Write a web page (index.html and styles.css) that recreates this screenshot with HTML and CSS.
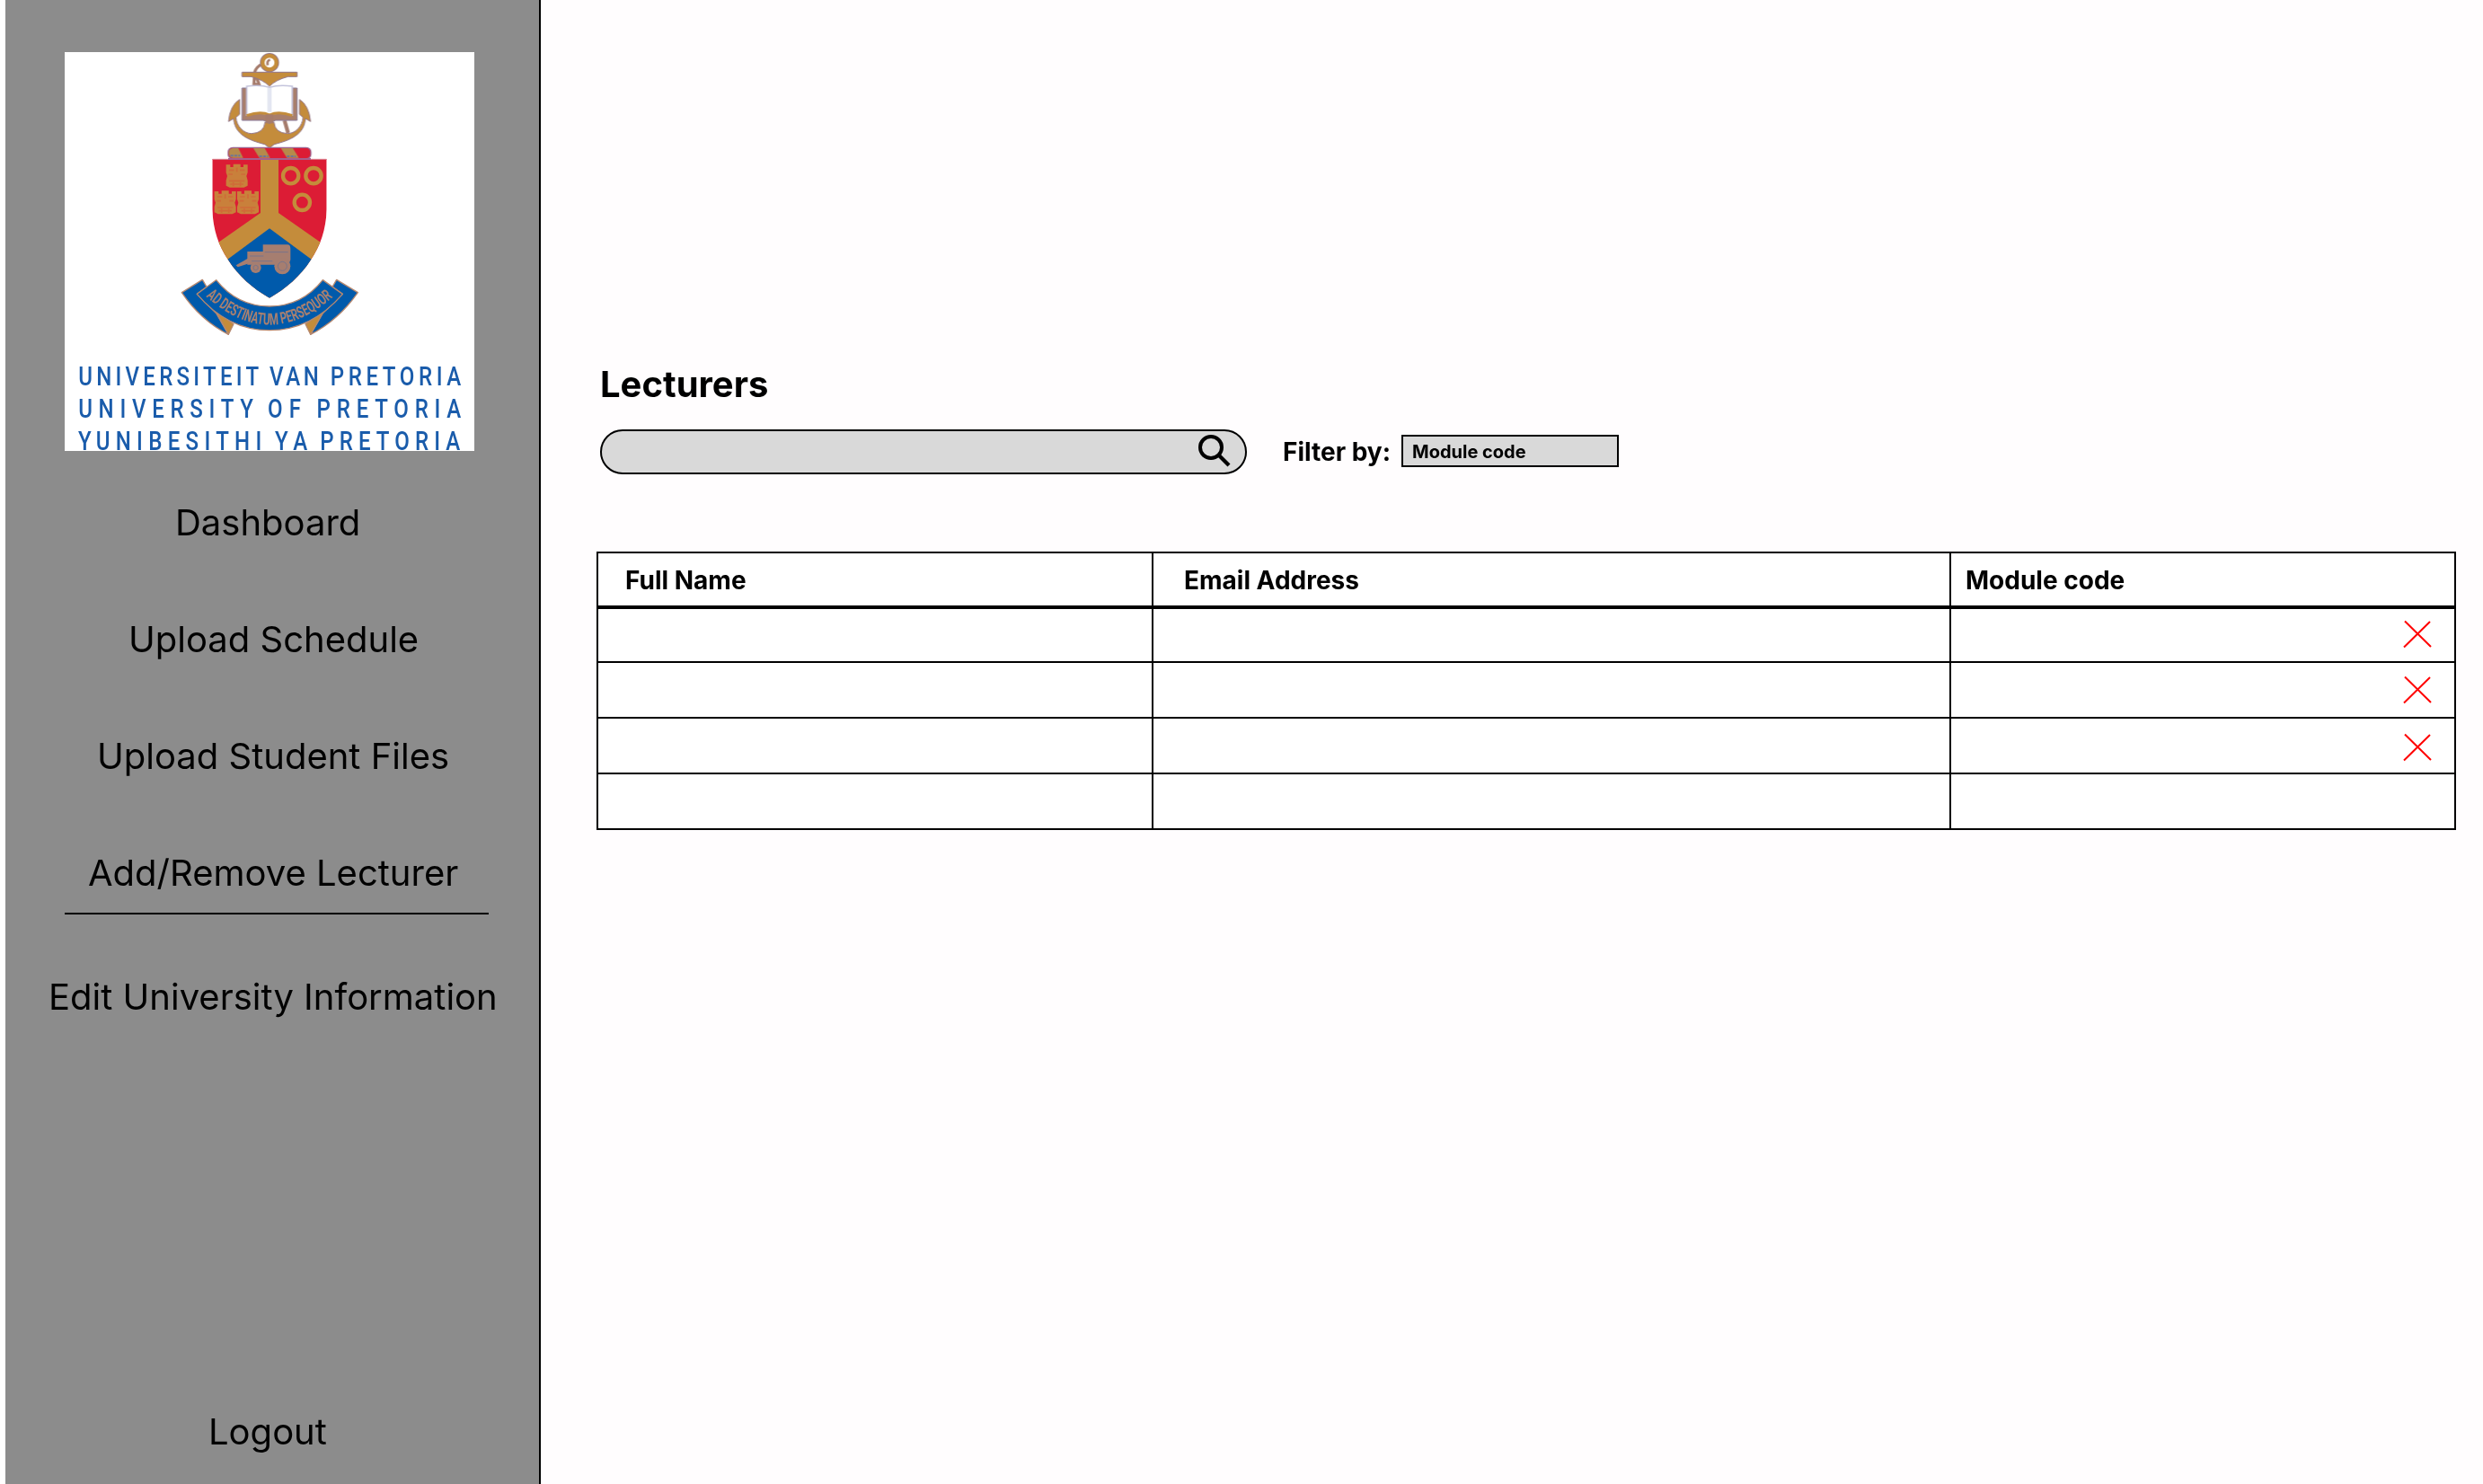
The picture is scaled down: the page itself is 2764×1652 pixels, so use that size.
FILE: index.html
```html
<!DOCTYPE html>
<html lang="en">
<head>
<meta charset="utf-8">
<title>Lecturers</title>
<link rel="stylesheet" href="styles.css">
</head>
<body>
<aside class="sidebar">
  <svg class="logo" viewBox="36 54 1368 1332" role="img" aria-label="University of Pretoria">
    <defs>
      <filter id="soft" x="-5%" y="-5%" width="110%" height="110%"><feGaussianBlur stdDeviation="2.2"/></filter>
      <clipPath id="shield"><path d="M529 410H911V580C908 650 890 700 858 748C825 800 775 845 720 875C665 845 615 800 582 748C550 700 532 650 529 580Z"/></clipPath>
      <path id="motto" d="M508 870Q722 1062 942 864"/>
      <g id="castle">
        <path d="M-36 -38H-22V-30H-12V-40H12V-30H22V-38H36V-12L32 0L36 14V32L24 38H-24L-36 32V14L-32 0L-36 -12Z" fill="#c9803a"/>
        <path d="M-26 -20H-10M10 -20H26M-28 -6H-14M14 -6H28M-26 16H26M-22 27H22M0 -28V-14M-12 20V34M12 20V34" stroke="#d06a38" stroke-width="5" fill="none"/>
      </g>
    </defs>
    <g filter="url(#soft)">
      <!-- anchor -->
      <g stroke="#93768a" stroke-width="3">
        <path d="M690 96Q668 112 670 130L668 160L686 164L676 136" fill="none" stroke="#a67c6c" stroke-width="10"/>
        <path d="M628 121H812V136H782Q742 146 720 168Q698 146 658 136H628Z" fill="#c48c3a"/>
        <circle cx="720" cy="89" r="23" fill="#fff" stroke="#93768a" stroke-width="18"/>
        <circle cx="720" cy="89" r="23" fill="#fff" stroke="#c48c3a" stroke-width="13"/>
        <path d="M722 80Q710 82 714 98" fill="none" stroke="#a67c6c" stroke-width="8"/>
        <path d="M620 212Q588 232 583 286L600 276C604 330 650 348 704 362L720 374L736 362C790 348 836 330 840 276L857 286Q852 232 820 212V262L832 272C830 302 806 326 780 326Q738 324 735 288H705Q702 324 660 326C634 326 610 302 608 272L620 262Z" fill="#c48c3a"/>
      </g>
      <path d="M770 282L782 324" stroke="#a67c6c" stroke-width="13"/>
      <!-- open book -->
      <path d="M628 174H812V282H740L720 292L700 282H628Z" fill="#a97f6c" stroke="#8a7c9c" stroke-width="3"/>
      <path d="M644 168Q690 162 720 172Q750 162 796 168V264Q750 252 720 264Q690 252 644 264Z" fill="#fff" stroke="#c4c4dc" stroke-width="5"/>
      <path d="M720 174V254" stroke="#e3e6f1" stroke-width="14"/>
      <path d="M644 266Q690 250 720 264Q750 250 796 266" fill="none" stroke="#c48c3a" stroke-width="9"/>
      <path d="M708 262H732V292H708Z" fill="#a67c6c"/>
      <!-- torse -->
      <rect x="582" y="373" width="276" height="37" rx="15" fill="#dc1c34" stroke="#9c6490" stroke-width="4"/>
      <path d="M596 375H616L632 407H596Q584 404 584 390Q584 378 596 375ZM666 375H704L722 407H686ZM758 375H798L818 407H778Z" fill="#b58a4c"/>
      <path d="M590 400H622M686 402H716M778 402H808" stroke="#68749c" stroke-width="6" stroke-dasharray="9 4"/>
      <!-- shield -->
      <g clip-path="url(#shield)">
        <path d="M520 400H920V900H520Z" fill="#dc1c34"/>
        <path d="M690 400H750V591L900 696V900H540V696L690 591Z" fill="#c48c3a"/>
        <path d="M720 643L860 746V900H580V746Z" fill="#005aab"/>
        <path d="M520 411H920" stroke="#d97583" stroke-width="6"/>
      </g>
      <path d="M582 411H858" stroke="#a5608e" stroke-width="6"/>
      <use href="#castle" x="611" y="468"/>
      <use href="#castle" x="572" y="557"/>
      <use href="#castle" x="648" y="557"/>
      <g fill="none" stroke="#c48c3a" stroke-width="13">
        <circle cx="791" cy="467" r="26"/><circle cx="867" cy="467" r="26"/><circle cx="829" cy="556" r="26"/>
      </g>
      <!-- ox wagon -->
      <g fill="#a67e70">
        <path d="M698 697H780Q790 697 790 710V748L784 764H646V720H698Z"/>
        <circle cx="674" cy="774" r="18"/><circle cx="763" cy="769" r="27"/>
        <path d="M650 742L608 766L614 772L656 758Z"/>
      </g>
      <g fill="none" stroke="#79748a" stroke-width="3">
        <circle cx="674" cy="774" r="8"/><circle cx="763" cy="769" r="15"/><path d="M654 735H700M660 752H730M704 722H782"/>
      </g>
      <!-- motto ribbon -->
      <g stroke="#b58870" stroke-width="4" stroke-linejoin="round">
        <path d="M427 857L496 814L510 838L478 862L542 926L583 997Q490 950 427 857Z" fill="#005aab"/>
        <path d="M1015 857L944 814L930 838L964 862L898 926L857 997Q950 950 1015 857Z" fill="#005aab"/>
        <path d="M540 918L600 962L583 997ZM902 918L840 962L857 997Z" fill="#c48c3a"/>
        <path d="M542 815Q612 903 720 903Q828 903 898 815L964 862Q860 983 720 983Q580 983 478 862Z" fill="#005aab"/>
      </g>
      <text class="motto"><textPath href="#motto" textLength="474" lengthAdjust="spacingAndGlyphs">AD DESTINATUM PERSEQUOR</textPath></text>
    </g>
    <g class="wordmark" transform="scale(.84 1)">
      <text x="97" y="1168" textLength="718">UNIVERSITEIT</text><text x="857" y="1168" textLength="196">VAN</text><text x="1099" y="1168" textLength="520">PRETORIA</text>
      <text x="97" y="1275" textLength="696">UNIVERSITY</text><text x="850" y="1275" textLength="132">OF</text><text x="1045" y="1275" textLength="574">PRETORIA</text>
      <text x="96" y="1382" textLength="730">YUNIBESITHI</text><text x="879" y="1382" textLength="129">YA</text><text x="1058" y="1382" textLength="557">PRETORIA</text>
    </g>
  </svg>
  <nav class="nav">
    <a class="nav-item nav-dashboard">Dashboard</a>
    <a class="nav-item nav-schedule">Upload Schedule</a>
    <a class="nav-item nav-files">Upload Student Files</a>
    <a class="nav-item nav-lecturer">Add/Remove Lecturer</a>
    <hr class="nav-line">
    <a class="nav-item nav-info">Edit University Information</a>
    <a class="nav-item nav-logout">Logout</a>
  </nav>
</aside>
<main class="main">
  <h1 class="title">Lecturers</h1>
  <div class="tools">
    <div class="search">
      <svg class="search-icon" viewBox="0 0 38 38"><circle cx="15" cy="15" r="12" fill="none" stroke="#000" stroke-width="4"/><path d="M23.3 23.3L35 35" stroke="#000" stroke-width="4.2"/></svg>
    </div>
    <span class="filter-label">Filter by:</span>
    <div class="select">Module code</div>
  </div>
  <table class="table">
    <colgroup><col class="col-name"><col class="col-email"><col class="col-code"></colgroup>
    <thead><tr><th class="th-name">Full Name</th><th class="th-email">Email Address</th><th class="th-code">Module code</th></tr></thead>
    <tbody>
      <tr><td></td><td></td><td><svg class="remove remove-high" viewBox="0 0 34 32"><path d="M3 1.5L32 30M31 2L2 30.5"/></svg></td></tr>
      <tr><td></td><td></td><td><svg class="remove" viewBox="0 0 34 32"><path d="M3 1.5L32 30M31 2L2 30.5"/></svg></td></tr>
      <tr><td></td><td></td><td><svg class="remove remove-low" viewBox="0 0 34 32"><path d="M3 1.5L32 30M31 2L2 30.5"/></svg></td></tr>
      <tr><td></td><td></td><td></td></tr>
    </tbody>
  </table>
</main>
</body>
</html>
```
FILE: styles.css
```css
* { box-sizing: border-box; }
body {
  margin: 0;
  padding-left: 6px;
  height: 1652px;
  display: flex;
  overflow: hidden;
  background: #fff;
  color: #000;
  font-family: Inter, "Liberation Sans", sans-serif;
}
.sidebar {
  flex: none;
  display: flex;
  flex-direction: column;
  width: 596px;
  height: 1652px;
  padding-top: 58px;
  background: #8c8c8c;
  border-right: 2px solid #000;
}
.logo {
  flex: none;
  width: 456px;
  height: 444px;
  margin-left: 66px;
  background: #fff;
  overflow: visible;
}
.motto { font: 700 54px Roboto, sans-serif; fill: #a9806f; }
.wordmark { font: 500 86px Roboto, sans-serif; fill: #1a5cab; }
.nav {
  flex: 1;
  display: flex;
  flex-direction: column;
  padding-top: 56px;
}
.nav-item {
  height: 48px;
  margin-bottom: 82px;
  font-size: 40px;
  line-height: 48px;
  white-space: nowrap;
}
.nav-dashboard { padding-left: 189px; }
.nav-schedule { padding-left: 137px; }
.nav-files { padding-left: 102px; }
.nav-lecturer { padding-left: 92px; margin-bottom: 20px; }
.nav-line {
  width: 472px;
  height: 2px;
  margin: 0 0 68px 66px;
  border: 0;
  background: #000;
}
.nav-info { padding-left: 48px; }
.nav-logout { margin-top: auto; margin-bottom: 34px; padding-left: 226px; }

.main {
  flex: 1;
  padding: 404px 30px 0 62px;
  background: #fffdfe;
}
.title {
  margin: 0 0 26px 4px;
  font-size: 40px;
  line-height: 48px;
  font-weight: 700;
}
.tools {
  display: flex;
  align-items: center;
  height: 50px;
  margin: 0 0 86px 4px;
}
.search {
  display: flex;
  justify-content: flex-end;
  width: 720px;
  height: 50px;
  padding: 3px 15px 0 0;
  background: #d9d9d9;
  border: 2px solid #000;
  border-radius: 25px;
}
.search-icon { width: 38px; height: 38px; }
.filter-label {
  width: 132px;
  margin-left: 40px;
  font-size: 28px;
  line-height: 34px;
  font-weight: 700;
  white-space: nowrap;
}
.select {
  width: 242px;
  height: 36px;
  margin-bottom: 2px;
  padding-left: 10px;
  background: #d9d9d9;
  border: 2px solid #000;
  font-size: 20px;
  line-height: 34px;
  font-weight: 700;
}
.table {
  width: 2070px;
  table-layout: fixed;
  border-collapse: separate;
  border-spacing: 0;
  border: solid #000;
  border-width: 2px 0 0 2px;
  background: #fff;
}
.col-name { width: 618px; }
.col-email { width: 888px; }
.table th, .table td {
  height: 62px;
  padding: 0;
  border: solid #000;
  border-width: 0 2px 2px 0;
}
.table th {
  padding-top: 2px;
  border-bottom-width: 4px;
  text-align: left;
  vertical-align: middle;
  font-size: 28px;
  line-height: 34px;
  font-weight: 700;
}
.table tbody tr:first-child td { height: 60px; }
.table .th-name { padding-left: 30px; }
.table .th-email { padding-left: 34px; }
.table .th-code { padding-left: 16px; }
.remove {
  display: block;
  width: 34px;
  height: 32px;
  margin: 0 24px 0 auto;
  fill: none;
  stroke: #f00;
  stroke-width: 2;
}
.remove-high { margin-bottom: 2px; }
.remove-low { margin-top: 4px; }
```
